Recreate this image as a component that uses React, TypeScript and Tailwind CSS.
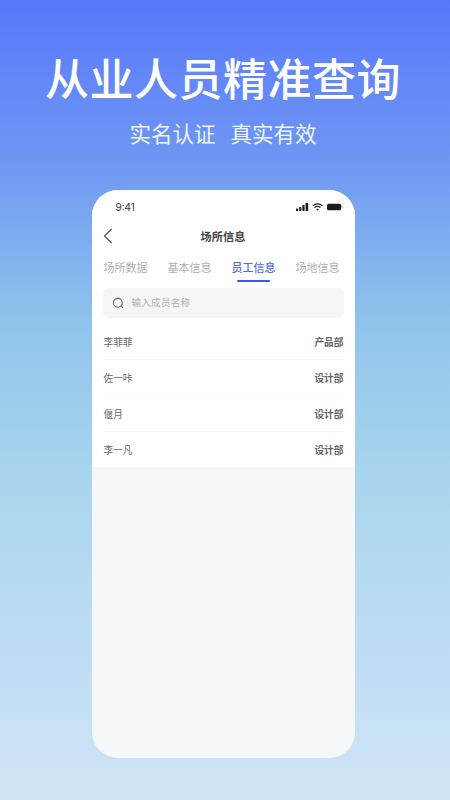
const CJK = "font-['Inter','Noto_Sans_CJK_SC',sans-serif]";

const TABS = [
  { label: "场所数据" },
  { label: "基本信息" },
  { label: "员工信息", active: true },
  { label: "场地信息" },
];

const STAFF = [
  { name: "李菲菲", dept: "产品部" },
  { name: "佐一咔", dept: "设计部" },
  { name: "偃月", dept: "设计部" },
  { name: "李一凡", dept: "设计部" },
];

function StatusIcons() {
  return (
    <div className="flex items-center gap-[3px]">
      <svg width="13" height="8" viewBox="0 0 13 8" fill="#1c1c1e">
        <rect x="0" y="5.5" width="2.2" height="2.5" rx="0.5" />
        <rect x="3.2" y="4" width="2.2" height="4" rx="0.5" />
        <rect x="6.4" y="2" width="2.2" height="6" rx="0.5" />
        <rect x="9.6" y="0" width="2.6" height="8" rx="0.5" />
      </svg>
      <svg width="11" height="8" viewBox="0 0 12 8" fill="none" stroke="#1c1c1e" strokeWidth="1.4">
        <path d="M0.8 2.8C3.8 0 8.2 0 11.2 2.8" />
        <path d="M2.8 4.7C4.6 3.1 7.4 3.1 9.2 4.7" />
        <path d="M6 8L4.5 6.4C5.4 5.7 6.6 5.7 7.5 6.4Z" fill="#1c1c1e" stroke="none" />
      </svg>
      <svg width="16" height="8" viewBox="0 0 17 8" className="ml-[1px]">
        <rect x="0" y="0.5" width="15" height="7" rx="1.6" fill="#1c1c1e" />
        <rect x="15.5" y="2.8" width="1.2" height="2.6" rx="0.5" fill="#b8b8bb" />
      </svg>
    </div>
  );
}

function Phone() {
  return (
    <div className="mt-[41px] flex h-[568px] w-[263px] flex-col overflow-hidden rounded-[26px] bg-[#f6f7f9]">
      <div className="bg-white">
        <div className="flex h-[27px] items-center justify-between pl-[24px] pr-[12px] pt-[10px] pb-[3px]">
          <span className="text-[10px] leading-[14px] text-[#333333]">9:41</span>
          <StatusIcons />
        </div>

        <div className="relative mt-[8px] flex h-[24px] items-center justify-center">
          <svg
            width="10"
            height="16"
            viewBox="0 0 10 16"
            fill="none"
            stroke="#444444"
            strokeWidth="1.1"
            className="absolute left-[11px] top-[3px]"
          >
            <path d="M8.5 1L1.5 8L8.5 15" />
          </svg>
          <span className="text-[11.2px] font-semibold leading-[16px] text-[#444444]">场所信息</span>
        </div>

        <div className="mt-[11px] flex items-start justify-between pl-[12px] pr-[15px]">
          {TABS.map((tab) => (
            <div key={tab.label} className="flex w-[44px] flex-col items-center">
              <span
                className={
                  tab.active
                    ? "whitespace-nowrap text-[11px] font-medium leading-[16px] text-[#5468f0]"
                    : "whitespace-nowrap text-[11px] leading-[16px] text-[#b0b0b0]"
                }
              >
                {tab.label}
              </span>
              <div className={tab.active ? "mt-[4px] h-[1.5px] w-[33px] rounded-full bg-[#3f55ee]" : "mt-[4px] h-[1.5px]"} />
            </div>
          ))}
        </div>

        <div className="mx-[11px] mt-[6px] flex h-[30px] items-center gap-[7px] rounded-[6px] bg-[#f5f5f5] pl-[9px]">
          <svg width="12" height="12" viewBox="0 0 12 12" fill="none" stroke="#666666" strokeWidth="1.1">
            <circle cx="5.8" cy="5.8" r="4.4" />
            <path d="M9 9L10.6 10.6" strokeLinecap="round" />
          </svg>
          <span className="ml-[1px] text-[9.5px] leading-[14px] tracking-[0.3px] text-[#b0b0b0]">输入成员名称</span>
        </div>

        <div className="mx-[11px] mt-[6px]">
          {STAFF.map((row, i) => (
            <div
              key={row.name}
              className={
                i < STAFF.length - 1
                  ? "flex h-[36px] items-center justify-between border-b border-[#f7f7f7] pt-[3px]"
                  : "flex h-[35px] items-start justify-between pt-[12px]"
              }
            >
              <span className="ml-[1px] text-[9.7px] leading-[14px] text-[#666666]">{row.name}</span>
              <span className="text-[9.7px] font-semibold leading-[14px] text-[#666666]">{row.dept}</span>
            </div>
          ))}
        </div>
      </div>
    </div>
  );
}

export default function App() {
  return (
    <div
      className={`${CJK} flex h-[800px] w-[450px] flex-col items-center overflow-hidden bg-[linear-gradient(180deg,#5878fb_0%,#6e97f3_20%,#8fc4eb_40%,#a9d5ee_60%,#d0e4f7_100%)] pr-[4px] pt-[50px]`}
    >
      <h1 className="whitespace-nowrap text-[44px] font-medium leading-[60px] tracking-[0.5px] text-white">
        从业人员精准查询
      </h1>
      <p className="mt-[9px] flex gap-[15px] text-[21.5px] leading-[30px] text-white/90">
        <span>实名认证</span>
        <span>真实有效</span>
      </p>
      <Phone />
    </div>
  );
}
